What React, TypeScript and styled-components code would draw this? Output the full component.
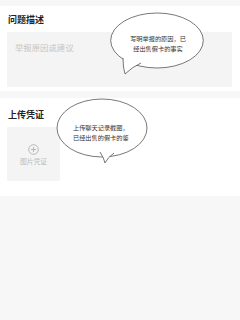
import styled, { createGlobalStyle } from 'styled-components';

const GlobalStyle = createGlobalStyle`
  html, body {
    margin: 0;
    padding: 0;
    background: #f7f7f7;
    font-family: "Noto Sans CJK SC", "Noto Sans", sans-serif;
  }
`;

const Page = styled.div`
  position: relative;
  width: 240px;
  min-height: 320px;
  padding-top: 6px;
  box-sizing: border-box;
  display: flex;
  flex-direction: column;
  gap: 7px;
`;

const Section = styled.section<{ $top: number; $bottom: number }>`
  background: #fff;
  padding: ${({ $top }) => $top}px 8px ${({ $bottom }) => $bottom}px 7px;
  display: flex;
  flex-direction: column;
  gap: 6px;
`;

const SectionTitle = styled.h2`
  margin: 0 0 0 1px;
  font-size: 9px;
  line-height: 12px;
  font-weight: 700;
  color: #222;
`;

const TextBox = styled.div`
  height: 55px;
  background: #f4f4f4;
  padding: 9px 8px;
  box-sizing: border-box;
  font-size: 8.4px;
  line-height: 12px;
  color: #c4c4c4;
`;

const UploadBox = styled.div`
  width: 53px;
  height: 54px;
  background: #f4f4f4;
  display: flex;
  flex-direction: column;
  align-items: center;
  justify-content: center;
  gap: 2px;
  padding-top: 2px;
  box-sizing: border-box;
`;

const UploadLabel = styled.span`
  font-size: 6.8px;
  line-height: 9px;
  color: #bbb;
`;

const Bubble = styled.div<{ $left: number; $top: number; $w: number; $h: number }>`
  position: absolute;
  left: ${({ $left }) => $left}px;
  top: ${({ $top }) => $top}px;
  width: ${({ $w }) => $w}px;
  height: ${({ $h }) => $h}px;

  svg {
    position: absolute;
    inset: 0;
  }
`;

const BubbleText = styled.div<{ $top: number; $left?: number; $center?: boolean }>`
  position: absolute;
  top: ${({ $top }) => $top}px;
  left: ${({ $left }) => $left ?? 0}px;
  right: 0;
  text-align: ${({ $center }) => ($center ? 'center' : 'left')};
  font-size: 6.2px;
  line-height: 9.5px;
  color: #333;
  white-space: nowrap;
`;

const PlusIcon = () => (
  <svg width="11" height="11" viewBox="0 0 11 11">
    <circle cx="5.5" cy="5.5" r="4.8" fill="none" stroke="#b0b0b0" strokeWidth="0.9" />
    <path d="M5.5 3v5M3 5.5h5" stroke="#b0b0b0" strokeWidth="0.9" />
  </svg>
);

export default function App() {
  return (
    <>
      <GlobalStyle />
      <Page>
        <Section $top={8} $bottom={4}>
          <SectionTitle>问题描述</SectionTitle>
          <TextBox>举报原因或建议</TextBox>
        </Section>
        <Section $top={11} $bottom={15}>
          <SectionTitle>上传凭证</SectionTitle>
          <UploadBox>
            <PlusIcon />
            <UploadLabel>图片凭证</UploadLabel>
          </UploadBox>
        </Section>

        <Bubble $left={110} $top={12} $w={96} $h={64}>
          <svg width="96" height="64" viewBox="0 0 96 64">
            <ellipse cx="47" cy="28.5" rx="46.3" ry="27.5" fill="#fff" stroke="#555" strokeWidth="0.8" />
            <path d="M13 46 Q13 56 15 62 Q22 55 31 51" fill="#fff" stroke="#555" strokeWidth="0.8" />
          </svg>
          <BubbleText $top={22} $center>
            写明举报的原因，已
            <br />
            经出售假卡的事实
          </BubbleText>
        </Bubble>

        <Bubble $left={56} $top={98} $w={93} $h={67}>
          <svg width="93" height="67" viewBox="0 0 93 67">
            <ellipse cx="46" cy="30" rx="45" ry="29" fill="#fff" stroke="#555" strokeWidth="0.8" />
            <path d="M44 54 Q48 60 49 65 Q52 59 58 55" fill="#fff" stroke="#555" strokeWidth="0.8" />
          </svg>
          <BubbleText $top={25} $left={17}>
            上传聊天记录截图，
            <br />
            已经出售的假卡的鉴
          </BubbleText>
        </Bubble>
      </Page>
    </>
  );
}
